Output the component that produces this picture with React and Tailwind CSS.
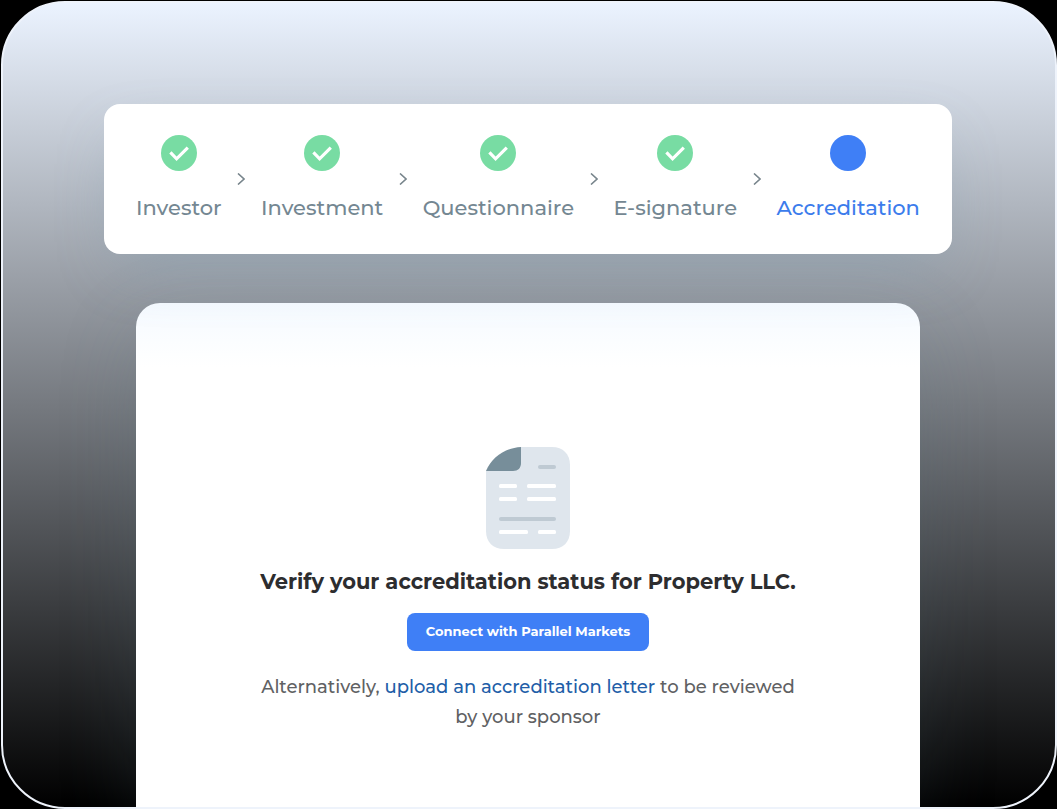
import React from "react"

const steps = [
  { label: "Investor", done: true },
  { label: "Investment", done: true },
  { label: "Questionnaire", done: true },
  { label: "E-signature", done: true },
  { label: "Accreditation", done: false },
]

const CheckIcon = () => (
  <svg viewBox="0 0 36 36" className="size-9" aria-hidden="true">
    <circle cx="18" cy="18" r="18" fill="#78dca3" />
    <path d="M9.4 17.4 15.6 23.8 26.8 12.7" fill="none" stroke="#fff" strokeWidth="3.2" />
  </svg>
)

const ChevronIcon = () => (
  <svg viewBox="0 0 8 12" className="w-2 h-3 shrink-0" aria-hidden="true">
    <path d="M1 .5 7 6 1 11.5" fill="none" stroke="#78858c" strokeWidth="1.6" />
  </svg>
)

const DocumentIcon = () => (
  <svg viewBox="0 0 84 102" className="w-[84px] h-[102px]" aria-hidden="true">
    <path d="M35 0H66C77 0 84 7 84 18V84C84 95 77 102 66 102H18C7 102 0 95 0 84V24Z" fill="#dfe6ed" />
    <path d="M0 24C6 10 19 1 35 0V16C35 21 32 24 27 24Z" fill="#778e9a" />
    <g fill="#bfcad3">
      <rect x="52" y="18" width="18" height="4" rx="2" />
      <rect x="13" y="70" width="57" height="4" rx="2" />
    </g>
    <g fill="#fff">
      <rect x="13" y="37" width="18" height="4" rx="1.5" />
      <rect x="41" y="37" width="29" height="4" rx="1.5" />
      <rect x="13" y="50" width="18" height="4" rx="1.5" />
      <rect x="41" y="50" width="29" height="4" rx="1.5" />
      <rect x="13" y="83" width="29" height="4" rx="1.5" />
      <rect x="52" y="83" width="18" height="4" rx="1.5" />
    </g>
  </svg>
)

const Stepper = () => (
  <nav
    aria-label="Progress"
    className="relative z-10 w-full max-w-[848px] rounded-2xl bg-white px-8 py-[31px] shadow-[0_24px_60px_-16px_rgba(125,155,175,0.4)]"
  >
    <ol className="flex items-center justify-between">
      {steps.map((step, index) => (
        <React.Fragment key={step.label}>
          {index > 0 && (
            <li aria-hidden="true">
              <ChevronIcon />
            </li>
          )}
          <li className="flex flex-col items-center gap-[22px]" aria-current={step.done ? undefined : "step"}>
            {step.done ? <CheckIcon /> : <span className="size-9 rounded-full bg-[#3f7ff6]" />}
            <span
              className={
                step.done
                  ? "text-[21px] leading-[30px] font-medium text-[#748792]"
                  : "text-[21px] leading-[30px] font-medium text-[#3c7cec]"
              }
            >
              {step.label}
            </span>
          </li>
        </React.Fragment>
      ))}
    </ol>
  </nav>
)

const App = () => {
  return (
    <div className="flex min-h-screen bg-black pt-px pl-px font-['Montserrat','Inter',sans-serif]">
      <main className="flex flex-1 flex-col items-center overflow-hidden rounded-[64px] border-2 border-[#eef3fb] bg-linear-to-b/srgb from-[#ebf3ff] to-black pt-[101px] pr-[26px] pl-6">
        <Stepper />

        {/* Verification card */}
        <section className="mt-[49px] flex w-full max-w-[784px] flex-1 flex-col items-center rounded-t-3xl bg-linear-to-b from-[#f5faff] to-white to-[64px] px-8 pt-36 pb-16 text-center shadow-[0_24px_80px_rgba(90,115,130,0.18)]">
          <DocumentIcon />
          <h1 className="mt-[18px] text-[21px] leading-[30px] font-bold text-[#2d2d2f]">
            Verify your accreditation status for Property LLC.
          </h1>
          <button
            type="button"
            className="mt-4 h-[38px] rounded-lg bg-[#3f7ff6] px-[19px] text-[13px] font-bold text-white"
          >
            Connect with Parallel Markets
          </button>
          <p className="mt-[21px] max-w-[580px] text-[18px] leading-[30px] font-medium text-[#606163]">
            Alternatively,{" "}
            <a href="#upload" className="text-[#225ea8]">
              upload an accreditation letter
            </a>{" "}
            to be reviewed
            <br />
            by your sponsor
          </p>
        </section>
      </main>
    </div>
  )
}

export default App
